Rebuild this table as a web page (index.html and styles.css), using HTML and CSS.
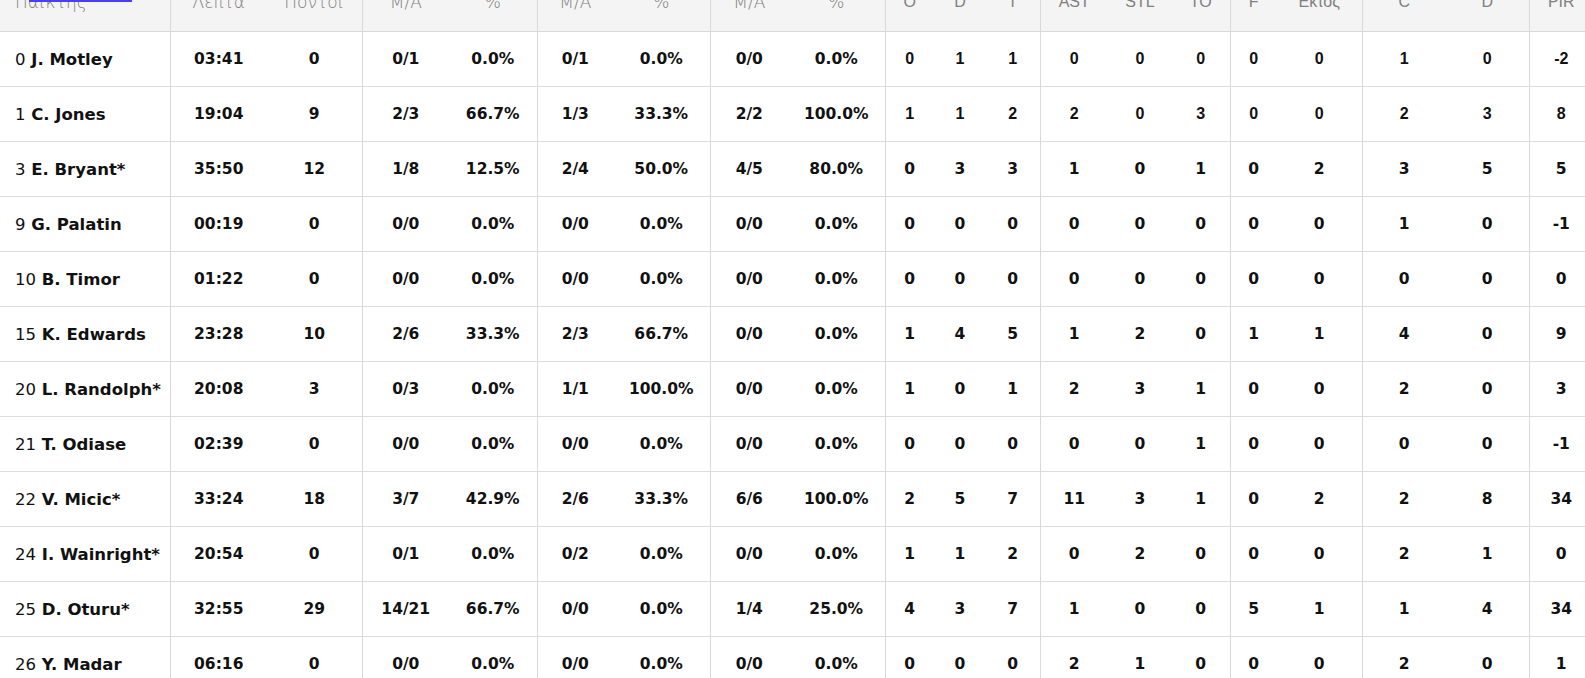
FILE: index.html
```html
<!DOCTYPE html>
<html lang="el">
<head>
<meta charset="utf-8">
<title>Box score</title>
<link rel="stylesheet" href="styles.css">
</head>
<body>
<div class="tab-mark"></div>
<div class="scroller">
<table class="box">
<colgroup>
<col class="w170"><col class="w97"><col class="w95"><col class="w87"><col class="w88"><col class="w76"><col class="w97"><col class="w78"><col class="w97"><col class="w49"><col class="w52"><col class="w54"><col class="w68"><col class="w64"><col class="w58"><col class="w47"><col class="w85"><col class="w84"><col class="w83"><col class="w64">
</colgroup>
<thead>
<tr>
<th class="name">Παίκτης</th><th class="g">Λεπτά</th><th>Πόντοι</th>
<th class="g">Μ/Α</th><th>%</th>
<th class="g">Μ/Α</th><th>%</th>
<th class="g">Μ/Α</th><th>%</th>
<th class="g a">O</th><th class="a">D</th><th class="a">T</th>
<th class="g a">AST</th><th class="a">STL</th><th class="a">TO</th>
<th class="g a">F</th><th class="a">Εκτος</th>
<th class="g a">C</th><th class="a">D</th>
<th class="g a">PIR</th>
</tr>
</thead>
<tbody>
<tr><td class="name"><span class="no">0</span> <b>J. Motley</b></td><td class="g">03:41</td><td>0</td><td class="g">0/1</td><td>0.0%</td><td class="g">0/1</td><td>0.0%</td><td class="g">0/0</td><td>0.0%</td><td class="g a">0</td><td class="a">1</td><td class="a">1</td><td class="g a">0</td><td class="a">0</td><td class="a">0</td><td class="g a">0</td><td class="a">0</td><td class="g a">1</td><td class="a">0</td><td class="g a">-2</td></tr>
<tr><td class="name"><span class="no">1</span> <b>C. Jones</b></td><td class="g">19:04</td><td>9</td><td class="g">2/3</td><td>66.7%</td><td class="g">1/3</td><td>33.3%</td><td class="g">2/2</td><td>100.0%</td><td class="g a">1</td><td class="a">1</td><td class="a">2</td><td class="g a">2</td><td class="a">0</td><td class="a">3</td><td class="g a">0</td><td class="a">0</td><td class="g a">2</td><td class="a">3</td><td class="g a">8</td></tr>
<tr><td class="name"><span class="no">3</span> <b>E. Bryant*</b></td><td class="g">35:50</td><td>12</td><td class="g">1/8</td><td>12.5%</td><td class="g">2/4</td><td>50.0%</td><td class="g">4/5</td><td>80.0%</td><td class="g">0</td><td>3</td><td>3</td><td class="g">1</td><td>0</td><td>1</td><td class="g">0</td><td>2</td><td class="g">3</td><td>5</td><td class="g">5</td></tr>
<tr><td class="name"><span class="no">9</span> <b>G. Palatin</b></td><td class="g">00:19</td><td>0</td><td class="g">0/0</td><td>0.0%</td><td class="g">0/0</td><td>0.0%</td><td class="g">0/0</td><td>0.0%</td><td class="g">0</td><td>0</td><td>0</td><td class="g">0</td><td>0</td><td>0</td><td class="g">0</td><td>0</td><td class="g">1</td><td>0</td><td class="g">-1</td></tr>
<tr><td class="name"><span class="no">10</span> <b>B. Timor</b></td><td class="g">01:22</td><td>0</td><td class="g">0/0</td><td>0.0%</td><td class="g">0/0</td><td>0.0%</td><td class="g">0/0</td><td>0.0%</td><td class="g">0</td><td>0</td><td>0</td><td class="g">0</td><td>0</td><td>0</td><td class="g">0</td><td>0</td><td class="g">0</td><td>0</td><td class="g">0</td></tr>
<tr><td class="name"><span class="no">15</span> <b>K. Edwards</b></td><td class="g">23:28</td><td>10</td><td class="g">2/6</td><td>33.3%</td><td class="g">2/3</td><td>66.7%</td><td class="g">0/0</td><td>0.0%</td><td class="g">1</td><td>4</td><td>5</td><td class="g">1</td><td>2</td><td>0</td><td class="g">1</td><td>1</td><td class="g">4</td><td>0</td><td class="g">9</td></tr>
<tr><td class="name"><span class="no">20</span> <b>L. Randolph*</b></td><td class="g">20:08</td><td>3</td><td class="g">0/3</td><td>0.0%</td><td class="g">1/1</td><td>100.0%</td><td class="g">0/0</td><td>0.0%</td><td class="g">1</td><td>0</td><td>1</td><td class="g">2</td><td>3</td><td>1</td><td class="g">0</td><td>0</td><td class="g">2</td><td>0</td><td class="g">3</td></tr>
<tr><td class="name"><span class="no">21</span> <b>T. Odiase</b></td><td class="g">02:39</td><td>0</td><td class="g">0/0</td><td>0.0%</td><td class="g">0/0</td><td>0.0%</td><td class="g">0/0</td><td>0.0%</td><td class="g">0</td><td>0</td><td>0</td><td class="g">0</td><td>0</td><td>1</td><td class="g">0</td><td>0</td><td class="g">0</td><td>0</td><td class="g">-1</td></tr>
<tr><td class="name"><span class="no">22</span> <b>V. Micic*</b></td><td class="g">33:24</td><td>18</td><td class="g">3/7</td><td>42.9%</td><td class="g">2/6</td><td>33.3%</td><td class="g">6/6</td><td>100.0%</td><td class="g">2</td><td>5</td><td>7</td><td class="g">11</td><td>3</td><td>1</td><td class="g">0</td><td>2</td><td class="g">2</td><td>8</td><td class="g">34</td></tr>
<tr><td class="name"><span class="no">24</span> <b>I. Wainright*</b></td><td class="g">20:54</td><td>0</td><td class="g">0/1</td><td>0.0%</td><td class="g">0/2</td><td>0.0%</td><td class="g">0/0</td><td>0.0%</td><td class="g">1</td><td>1</td><td>2</td><td class="g">0</td><td>2</td><td>0</td><td class="g">0</td><td>0</td><td class="g">2</td><td>1</td><td class="g">0</td></tr>
<tr><td class="name"><span class="no">25</span> <b>D. Oturu*</b></td><td class="g">32:55</td><td>29</td><td class="g">14/21</td><td>66.7%</td><td class="g">0/0</td><td>0.0%</td><td class="g">1/4</td><td>25.0%</td><td class="g">4</td><td>3</td><td>7</td><td class="g">1</td><td>0</td><td>0</td><td class="g">5</td><td>1</td><td class="g">1</td><td>4</td><td class="g">34</td></tr>
<tr><td class="name"><span class="no">26</span> <b>Y. Madar</b></td><td class="g">06:16</td><td>0</td><td class="g">0/0</td><td>0.0%</td><td class="g">0/0</td><td>0.0%</td><td class="g">0/0</td><td>0.0%</td><td class="g">0</td><td>0</td><td>0</td><td class="g">2</td><td>1</td><td>0</td><td class="g">0</td><td>0</td><td class="g">2</td><td>0</td><td class="g">1</td></tr>
</tbody>
</table>
</div>
</body>
</html>
```
FILE: styles.css
```css
html, body {
  margin: 0;
  padding: 0;
  background: #ffffff;
  overflow: hidden;
}
body {
  font-family: "DejaVu Sans", "Noto Sans", sans-serif;
  color: #111111;
  position: relative;
}
.tab-mark {
  position: absolute;
  left: 29px;
  top: 0;
  width: 103px;
  height: 2px;
  background: #4b3cf5;
  z-index: 2;
}
.scroller {
  margin-top: -27px;
  width: 1600px;
}
.box {
  border-collapse: collapse;
  table-layout: fixed;
  width: 1593px;
}
.w170 { width: 170px; }
.w97 { width: 97px; }
.w95 { width: 95px; }
.w87 { width: 87px; }
.w88 { width: 88px; }
.w76 { width: 76px; }
.w78 { width: 78px; }
.w49 { width: 49px; }
.w52 { width: 52px; }
.w54 { width: 54px; }
.w68 { width: 68px; }
.w64 { width: 64px; }
.w58 { width: 58px; }
.w47 { width: 47px; }
.w85 { width: 85px; }
.w84 { width: 84px; }
.w83 { width: 83px; }
.box th {
  height: 58px;
  padding: 0;
  background: #f4f4f4;
  color: #808080;
  font-weight: 200;
  font-size: 17px;
  text-align: center;
  vertical-align: middle;
  border-bottom: 1px solid #d9d9d9;
}
.box th.a {
  font-family: "Liberation Sans", Arial, sans-serif;
  font-weight: 400;
  font-size: 16px;
}
.box td {
  height: 54px;
  padding: 0;
  text-align: center;
  vertical-align: middle;
  font-size: 15.5px;
  font-weight: 700;
  border-bottom: 1px solid #dcdcdc;
  white-space: nowrap;
}
.box td b {
  font-weight: 700;
}
.box th.name, .box td.name {
  text-align: left;
  padding-left: 15px;
}
.box td.name {
  font-size: 16.5px;
}
.box td.name .no {
  font-weight: 400;
}
.box td.a {
  font-family: "Liberation Sans", Arial, sans-serif;
  font-size: 16px;
}
.box .g {
  border-left: 1px solid #d9d9d9;
}
```
